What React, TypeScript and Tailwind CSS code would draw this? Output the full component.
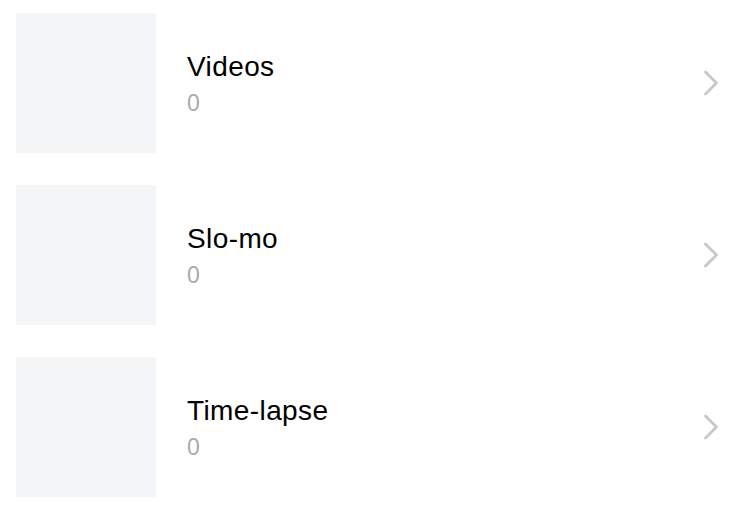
const albums = [
  { name: "Videos", count: 0 },
  { name: "Slo-mo", count: 0 },
  { name: "Time-lapse", count: 0 },
];

function Chevron() {
  return (
    <svg width="16" height="26" viewBox="0 0 16 26" fill="none">
      <path
        d="M2.5 2 L13.5 13 L2.5 24"
        stroke="#c7c7cc"
        strokeWidth="2.8"
        strokeLinecap="round"
        strokeLinejoin="round"
      />
    </svg>
  );
}

export default function App() {
  return (
    <div
      className="w-[750px] h-[511px] bg-white pt-[13px] pl-4 pr-[31px] flex flex-col gap-8"
      style={{ fontFamily: '"Liberation Sans", Arial, sans-serif' }}
    >
      {albums.map((a) => (
        <div key={a.name} className="flex items-center h-[140px]">
          <div className="w-[140px] h-[140px] bg-[#f4f5f7] shrink-0" />
          <div className="flex-1 pl-[31px] pt-[5px] flex flex-col">
            <span className="text-[28px] leading-[34px] tracking-[0.4px] text-black">{a.name}</span>
            <span className="text-[23px] leading-[38px] text-[#aaaaaa]">{a.count}</span>
          </div>
          <Chevron />
        </div>
      ))}
    </div>
  );
}
